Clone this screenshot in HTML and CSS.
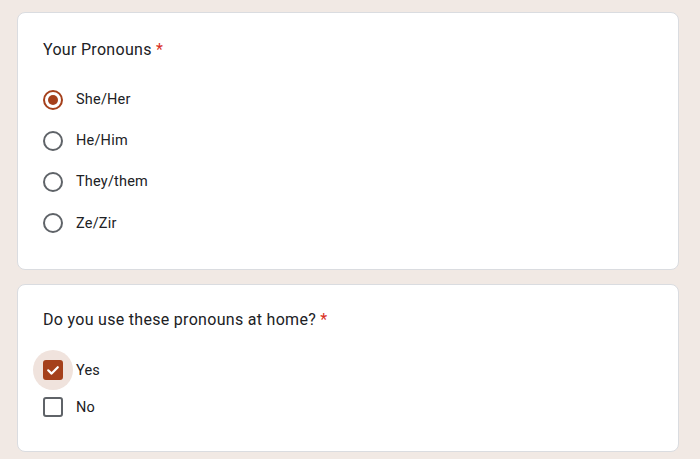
FILE: index.html
```html
<!DOCTYPE html>
<html>
<head>
<meta charset="utf-8">
<link rel="stylesheet" href="styles.css">
</head>
<body>
<div class="card card-radio">
  <div class="title">Your Pronouns <span class="req">*</span></div>
  <div class="options">
    <div class="row"><span class="radio checked"></span><span class="label">She/Her</span></div>
    <div class="row"><span class="radio"></span><span class="label">He/Him</span></div>
    <div class="row"><span class="radio"></span><span class="label">They/them</span></div>
    <div class="row"><span class="radio"></span><span class="label">Ze/Zir</span></div>
  </div>
</div>
<div class="card card-check">
  <div class="title">Do you use these pronouns at home? <span class="req">*</span></div>
  <div class="options checks">
    <div class="row crow"><span class="cbwrap"><span class="ripple"></span><span class="cb checked"><svg viewBox="0 0 20 20" width="20" height="20"><path d="M5.2 10.3 L8.6 13.6 L14.8 7.2" fill="none" stroke="#fff" stroke-width="2.2" stroke-linecap="round" stroke-linejoin="round"/></svg></span></span><span class="label">Yes</span></div>
    <div class="row crow"><span class="cbwrap"><span class="cb"></span></span><span class="label">No</span></div>
  </div>
</div>
</body>
</html>
```
FILE: styles.css
```css
* { box-sizing: border-box; }
html, body { margin: 0; padding: 0; }
body {
  background: #f1e9e4;
  width: 700px;
  height: 459px;
  overflow: hidden;
  padding-top: 12px;
  font-family: Roboto, "Liberation Sans", Arial, sans-serif;
  color: #202124;
}
.card {
  margin-left: 17px;
  width: 662px;
  background: #fff;
  border: 1px solid #dadce0;
  border-radius: 8px;
  padding: 25px 25px 25px;
}
.card-check { margin-top: 14px; padding-top: 23px; padding-bottom: 25px; }
.title {
  font-size: 16px;
  line-height: 24px;
  height: 24px;
  letter-spacing: 0.3px;
}
.req { color: #d93025; }
.options { margin-top: 17px; display: flex; flex-direction: column; }
.row {
  height: 41.2px;
  display: flex;
  align-items: center;
}
.label {
  margin-left: 13px;
  font-size: 14.5px;
  letter-spacing: 0.2px;
}
.radio {
  width: 20px;
  height: 20px;
  border: 2px solid #5f6368;
  border-radius: 50%;
  display: flex;
  align-items: center;
  justify-content: center;
  flex: none;
}
.radio.checked { border-color: #a5401b; }
.radio.checked::after {
  content: "";
  width: 10px;
  height: 10px;
  border-radius: 50%;
  background: #a5401b;
}
.checks { margin-top: 20px; }
.crow { height: 37px; }
.cbwrap {
  position: relative;
  width: 20px;
  height: 20px;
  flex: none;
}
.ripple {
  position: absolute;
  left: -10px;
  top: -10px;
  width: 40px;
  height: 40px;
  border-radius: 50%;
  background: #f0e3dd;
}
.cb {
  position: relative;
  display: block;
  width: 20px;
  height: 20px;
  border: 2px solid #5f6368;
  border-radius: 3px;
}
.cb.checked {
  background: #a5401b;
  border-color: #a5401b;
}
.cb svg { position: absolute; left: -2px; top: -2px; }
```
